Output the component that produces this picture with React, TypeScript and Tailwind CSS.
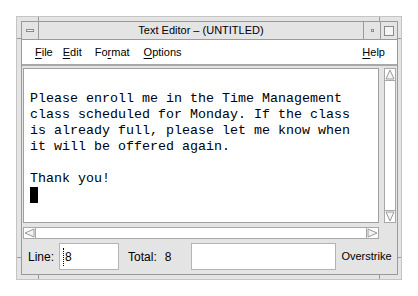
import React from 'react';

const lines = [
  'Please enroll me in the Time Management',
  'class scheduled for Monday. If the class',
  'is already full, please let me know when',
  'it will be offered again.',
  '',
  'Thank you!',
];

const Mn: React.FC<{ k: string; rest: string; pre?: string }> = ({ pre = '', k, rest }) => (
  <span>
    {pre}
    <span className="underline underline-offset-2">{k}</span>
    {rest}
  </span>
);

const App: React.FC = () => {
  return (
    <div className="w-[418px] h-[296px] bg-white pt-[16px] pl-[16px] font-['Liberation_Sans',sans-serif] text-[11px] text-black">
      <div className="relative w-[386px] h-[264px] bg-[#e4e4e4] border border-[#c4c4c4] p-[4px] flex">
        {/* resize handle ticks on the frame */}
        <span className="absolute top-0 left-[21px] w-px h-[4px] bg-[#9a9a9a]" />
        <span className="absolute top-0 right-[21px] w-px h-[4px] bg-[#9a9a9a]" />
        <span className="absolute bottom-0 left-[21px] w-px h-[4px] bg-[#9a9a9a]" />
        <span className="absolute bottom-0 right-[21px] w-px h-[4px] bg-[#9a9a9a]" />
        <span className="absolute left-0 top-[21px] h-px w-[4px] bg-[#9a9a9a]" />
        <span className="absolute right-0 top-[21px] h-px w-[4px] bg-[#9a9a9a]" />
        <span className="absolute left-0 bottom-[21px] h-px w-[4px] bg-[#9a9a9a]" />
        <span className="absolute right-0 bottom-[21px] h-px w-[4px] bg-[#9a9a9a]" />
        <div className="flex-1 flex flex-col border border-[#9a9a9a]">
          {/* title bar */}
          <div className="h-[18px] flex border-b border-[#9a9a9a]">
            <div className="w-[17px] border-r border-[#9a9a9a] flex items-center justify-center">
              <div className="w-[8px] h-[3px] border border-[#8a8a8a] bg-[#f4f4f4]" />
            </div>
            <div className="flex-1 flex items-center justify-center">Text Editor – (UNTITLED)</div>
            <div className="w-[17px] border-l border-[#9a9a9a] flex items-center justify-center">
              <div className="w-[3px] h-[3px] border border-[#8a8a8a] bg-[#f4f4f4]" />
            </div>
            <div className="w-[17px] border-l border-[#9a9a9a] flex items-center justify-center">
              <div className="w-[10px] h-[10px] border border-[#8a8a8a] bg-[#f4f4f4]" />
            </div>
          </div>
          {/* menu bar */}
          <div className="h-[26px] bg-white flex items-center pl-[13px] pr-[12px] border-b-2 border-[#a8a8a8]">
            <div className="flex">
              <Mn k="F" rest="ile" />
              <span className="ml-[10px]"><Mn k="E" rest="dit" /></span>
              <span className="ml-[13px]"><Mn pre="Fo" k="r" rest="mat" /></span>
              <span className="ml-[14px]"><Mn k="O" rest="ptions" /></span>
            </div>
            <div className="ml-auto">
              <Mn k="H" rest="elp" />
            </div>
          </div>
          {/* text + scrollbars */}
          <div className="flex flex-col pl-[1px] pt-[2px] pr-[1px]">
            <div className="flex h-[155px]">
              <div className="w-[356px] bg-white border border-[#a0a0a0] pl-[6px] pt-[22px] font-['Liberation_Mono',monospace] text-[13.33px] leading-[16px] whitespace-pre">
                {lines.map((l, i) => (
                  <div key={i} className="h-[16px]">{l}</div>
                ))}
                <div className="h-[16px] w-[8px] bg-black" />
              </div>
              <div className="ml-[5px] w-[12px] flex flex-col bg-white border border-[#a8a8a8]">
                <svg width="10" height="11" viewBox="0 0 10 11" className="block">
                  <polygon points="5,1 9,10 1,10" fill="#f4f4f4" stroke="#9a9a9a" />
                </svg>
                <div className="flex-1 border-t border-b border-[#a8a8a8] bg-white" />
                <svg width="10" height="11" viewBox="0 0 10 11" className="block">
                  <polygon points="1,1 9,1 5,10" fill="#f4f4f4" stroke="#9a9a9a" />
                </svg>
              </div>
            </div>
            <div className="mt-[4px] w-[356px] h-[12px] flex bg-white border border-[#a8a8a8]">
              <svg width="11" height="10" viewBox="0 0 11 10" className="block">
                <polygon points="1,5 10,1 10,9" fill="#f4f4f4" stroke="#9a9a9a" />
              </svg>
              <div className="flex-1 border-l border-r border-[#a8a8a8] bg-white" />
              <svg width="11" height="10" viewBox="0 0 11 10" className="block">
                <polygon points="1,1 10,5 1,9" fill="#f4f4f4" stroke="#9a9a9a" />
              </svg>
            </div>
          </div>
          {/* status bar */}
          <div className="flex-1 flex items-center pl-[6px] text-[12px]">
            <span>Line:</span>
            <div className="ml-[5px] w-[60px] h-[27px] bg-white border border-[#b4b4b4] flex items-center pl-[3px]">
              <span className="border-l border-dotted border-black pl-[1px]">8</span>
            </div>
            <span className="ml-[9px]">Total:</span>
            <span className="ml-[8px]">8</span>
            <div className="ml-[20px] w-[145px] h-[27px] bg-white border border-[#b4b4b4]" />
            <span className="ml-[5px] text-[11px]">Overstrike</span>
          </div>
        </div>
      </div>
    </div>
  );
};

export default App;
